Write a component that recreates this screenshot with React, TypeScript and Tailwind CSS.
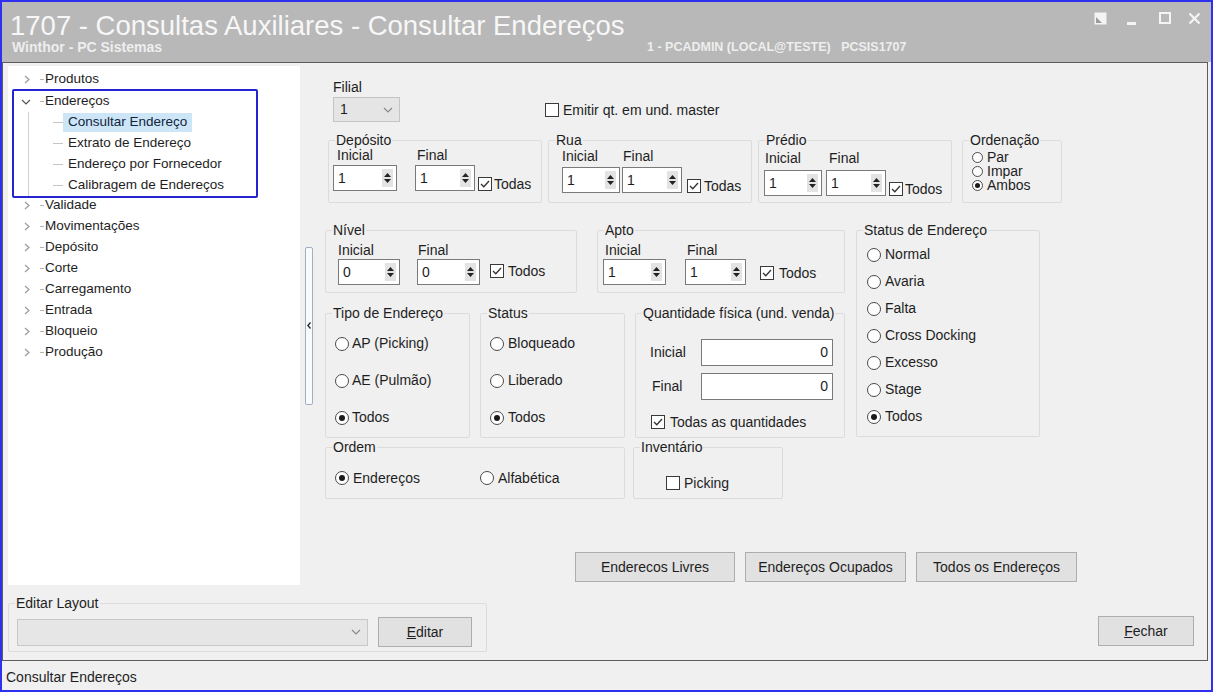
import React from "react";

type Kids = { children?: React.ReactNode; className?: string };

function Check({ checked }: { checked?: boolean }) {
  return (
    <span className="w-[14px] h-[14px] border border-[#3a3a3a] bg-white flex items-center justify-center shrink-0">
      {checked && (
        <svg width="10" height="8" viewBox="0 0 10 8">
          <path d="M1 4 L3.8 6.8 L9 1" fill="none" stroke="#333" strokeWidth="1.3" />
        </svg>
      )}
    </span>
  );
}

function Radio({ on, small }: { on?: boolean; small?: boolean }) {
  return (
    <span
      className={`${small ? "w-[11px] h-[11px]" : "w-[14px] h-[14px]"} rounded-full border border-[#4a4a4a] bg-white flex items-center justify-center shrink-0`}
    >
      {on && <span className={`${small ? "w-[5px] h-[5px]" : "w-[6px] h-[6px]"} rounded-full bg-[#1a1a1a]`} />}
    </span>
  );
}

function Spin({ value, w }: { value: string; w: string }) {
  return (
    <div className={`${w} h-[26px] border border-[#7a7a7a] bg-white flex items-center`}>
      <span className="flex-1 pl-[4px] leading-none">{value}</span>
      <span className="w-[11px] h-[18px] bg-[#e3e3e3] mr-[3px] flex flex-col items-center justify-center gap-[2px]">
        <svg width="7" height="4" viewBox="0 0 7 4">
          <path d="M0 4 L3.5 0 L7 4Z" fill="#222" />
        </svg>
        <svg width="7" height="4" viewBox="0 0 7 4">
          <path d="M0 0 L3.5 4 L7 0Z" fill="#222" />
        </svg>
      </span>
    </div>
  );
}

function Group({ title, className, children }: Kids & { title: string }) {
  return (
    <fieldset className={`border border-[#dcdcdc] rounded-[2px] shrink-0 ${className ?? ""}`}>
      <legend className="ml-[6px] px-[1px] leading-[14px]">{title}</legend>
      {children}
    </fieldset>
  );
}

function Btn({ children, className }: Kids) {
  return (
    <div className={`h-[30px] bg-[#e1e1e1] border border-[#adadad] flex items-center justify-center shrink-0 ${className ?? ""}`}>
      {children}
    </div>
  );
}

function Chevron() {
  return (
    <svg width="6" height="9" viewBox="0 0 6 9" className="shrink-0">
      <path d="M1 1 L5 4.5 L1 8" fill="none" stroke="#9a9a9a" strokeWidth="1.2" />
    </svg>
  );
}

function TreeRow({ label }: { label: string }) {
  return (
    <div className="h-[21px] flex items-center pl-[16px]">
      <Chevron />
      <span className="ml-[10px] w-[4px] h-px bg-[#b4b4b4]" />
      <span className="ml-[1px]">{label}</span>
    </div>
  );
}

function Child({ label, selected }: { label: string; selected?: boolean }) {
  return (
    <div className="h-[21px] flex items-center">
      <span className="ml-[24px] w-[10px] h-px bg-[#c4c4c4]" />
      <span className={`h-[19px] flex items-center px-[5px] ${selected ? "bg-[#cde6f7] text-[#13233d]" : ""}`}>{label}</span>
    </div>
  );
}

function Tree() {
  const rest = ["Validade", "Movimentações", "Depósito", "Corte", "Carregamento", "Entrada", "Bloqueio", "Produção"];
  return (
    <div className="ml-[5px] mt-[3px] w-[292px] h-[519px] bg-white pt-[3px] text-[13.5px]">
      <TreeRow label="Produtos" />
      <div className="ml-[4px] w-[246px] border-2 border-[#2424d0] rounded-[2px] -mt-[1px] -mb-[3px]">
        <div className="h-[21px] flex items-center pl-[7px]">
          <svg width="10" height="6" viewBox="0 0 10 6" className="shrink-0">
            <path d="M1 1 L5 5 L9 1" fill="none" stroke="#555" strokeWidth="1.2" />
          </svg>
          <span className="ml-[9px] w-[4px] h-px bg-[#b4b4b4]" />
          <span className="ml-[1px]">Endereços</span>
        </div>
        <div className="ml-[14px] border-l border-[#d0d0d0]">
          <Child label="Consultar Endereço" selected />
          <Child label="Extrato de Endereço" />
          <Child label="Endereço por Fornecedor" />
          <Child label="Calibragem de Endereços" />
        </div>
      </div>
      {rest.map((r) => (
        <TreeRow key={r} label={r} />
      ))}
    </div>
  );
}

function Form() {
  const status = ["Normal", "Avaria", "Falta", "Cross Docking", "Excesso", "Stage", "Todos"];
  return (
    <div className="flex flex-col w-[892px]">
      {/* Filial + master unit option */}
      <div className="flex items-end pl-[18px] pt-[17px]">
        <div className="flex flex-col">
          <span className="leading-[14px]">Filial</span>
          <div className="mt-[3px] w-[67px] h-[25px] bg-[#e5e5e5] border border-[#c4c4c4] flex items-center justify-between px-[6px]">
            <span>1</span>
            <svg width="10" height="6" viewBox="0 0 10 6">
              <path d="M1 1 L5 5 L9 1" fill="none" stroke="#8a8a8a" strokeWidth="1.2" />
            </svg>
          </div>
        </div>
        <div className="ml-[145px] mb-[5px] flex items-center">
          <Check />
          <span className="ml-[4px] leading-[14px]">Emitir qt. em und. master</span>
        </div>
      </div>

      {/* Depósito / Rua / Prédio / Ordenação */}
      <div className="flex mt-[11px] pl-[13px]">
        <Group title="Depósito" className="w-[214px] h-[70px]">
          <div className="flex items-end pl-[4px] pt-[2px]">
            <div className="flex flex-col">
              <span className="pl-[4px] leading-[12px]">Inicial</span>
              <div className="mt-[4px]">
                <Spin value="1" w="w-[64px]" />
              </div>
            </div>
            <div className="flex flex-col ml-[18px]">
              <span className="pl-[2px] leading-[12px]">Final</span>
              <div className="mt-[4px]">
                <Spin value="1" w="w-[60px]" />
              </div>
            </div>
            <div className="flex items-center ml-[3px]">
              <Check checked />
              <span className="ml-[2px] leading-[14px]">Todas</span>
            </div>
          </div>
        </Group>
        <Group title="Rua" className="ml-[6px] w-[204px] h-[70px]">
          <div className="flex items-end pl-[13px] pt-[3px]">
            <div className="flex flex-col">
              <span className="leading-[12px]">Inicial</span>
              <div className="mt-[5px]">
                <Spin value="1" w="w-[58px]" />
              </div>
            </div>
            <div className="flex flex-col ml-[2px]">
              <span className="pl-[1px] leading-[12px]">Final</span>
              <div className="mt-[5px]">
                <Spin value="1" w="w-[60px]" />
              </div>
            </div>
            <div className="flex items-center ml-[5px]">
              <Check checked />
              <span className="ml-[3px] leading-[14px]">Todas</span>
            </div>
          </div>
        </Group>
        <Group title="Prédio" className="ml-[6px] w-[194px] h-[70px]">
          <div className="flex items-end pl-[5px] pt-[5px]">
            <div className="flex flex-col">
              <span className="pl-[1px] leading-[12px]">Inicial</span>
              <div className="mt-[6px]">
                <Spin value="1" w="w-[58px]" />
              </div>
            </div>
            <div className="flex flex-col ml-[4px]">
              <span className="pl-[3px] leading-[12px]">Final</span>
              <div className="mt-[6px]">
                <Spin value="1" w="w-[60px]" />
              </div>
            </div>
            <div className="flex items-center ml-[3px]">
              <Check checked />
              <span className="ml-[2px] leading-[14px]">Todos</span>
            </div>
          </div>
        </Group>
        <Group title="Ordenação" className="ml-[10px] w-[100px] h-[70px]">
          <div className="flex flex-col pl-[9px] mt-[3px]">
            <div className="h-[14px] flex items-center">
              <Radio small />
              <span className="ml-[4px] leading-[14px]">Par</span>
            </div>
            <div className="h-[14px] flex items-center">
              <Radio small />
              <span className="ml-[4px] leading-[14px]">Impar</span>
            </div>
            <div className="h-[14px] flex items-center">
              <Radio small on />
              <span className="ml-[4px] leading-[14px]">Ambos</span>
            </div>
          </div>
        </Group>
      </div>

      {/* Nível / Apto / tipos / quantidades + status de endereço */}
      <div className="flex items-start mt-[20px] pl-[10px]">
        <div className="flex flex-col">
          <div className="flex">
            <Group title="Nível" className="w-[252px] h-[70px]">
              <div className="flex items-center pl-[12px] pt-[7px]">
                <div className="flex flex-col">
                  <span className="leading-[12px]">Inicial</span>
                  <div className="mt-[3px]">
                    <Spin value="0" w="w-[62px]" />
                  </div>
                </div>
                <div className="flex flex-col ml-[17px]">
                  <span className="pl-[1px] leading-[12px]">Final</span>
                  <div className="mt-[3px]">
                    <Spin value="0" w="w-[63px]" />
                  </div>
                </div>
                <div className="flex items-center ml-[10px] mt-[13px]">
                  <Check checked />
                  <span className="ml-[4px] leading-[14px]">Todos</span>
                </div>
              </div>
            </Group>
            <Group title="Apto" className="ml-[20px] w-[248px] h-[70px]">
              <div className="flex items-center pl-[5px] pt-[7px]">
                <div className="flex flex-col">
                  <span className="pl-[2px] leading-[12px]">Inicial</span>
                  <div className="mt-[3px]">
                    <Spin value="1" w="w-[63px]" />
                  </div>
                </div>
                <div className="flex flex-col ml-[19px]">
                  <span className="pl-[2px] leading-[12px]">Final</span>
                  <div className="mt-[3px]">
                    <Spin value="1" w="w-[61px]" />
                  </div>
                </div>
                <div className="flex items-center ml-[14px] mt-[17px]">
                  <Check checked />
                  <span className="ml-[5px] leading-[14px]">Todos</span>
                </div>
              </div>
            </Group>
          </div>
          <div className="flex mt-[13px]">
            <Group title="Tipo de Endereço" className="w-[145px] h-[132px]">
              <div className="flex flex-col pl-[9px] mt-[5px]">
                {[
                  ["AP (Picking)", false],
                  ["AE (Pulmão)", false],
                  ["Todos", true],
                ].map(([t, on]) => (
                  <div key={t as string} className="h-[37px] flex items-center">
                    <Radio on={on as boolean} />
                    <span className="ml-[3px]">{t as string}</span>
                  </div>
                ))}
              </div>
            </Group>
            <Group title="Status" className="ml-[10px] w-[145px] h-[132px]">
              <div className="flex flex-col pl-[9px] mt-[5px]">
                {[
                  ["Bloqueado", false],
                  ["Liberado", false],
                  ["Todos", true],
                ].map(([t, on]) => (
                  <div key={t as string} className="h-[37px] flex items-center">
                    <Radio on={on as boolean} />
                    <span className="ml-[4px]">{t as string}</span>
                  </div>
                ))}
              </div>
            </Group>
            <Group title="Quantidade física (und. venda)" className="ml-[10px] w-[210px] h-[132px]">
              <div className="flex flex-col pl-[14px] mt-[19px]">
                <div className="flex items-center">
                  <span className="w-[51px]">Inicial</span>
                  <div className="w-[132px] h-[27px] bg-white border border-[#7a7a7a] flex items-center justify-end pr-[4px]">0</div>
                </div>
                <div className="flex items-center mt-[7px]">
                  <span className="w-[51px] pl-[2px]">Final</span>
                  <div className="w-[132px] h-[27px] bg-white border border-[#7a7a7a] flex items-center justify-end pr-[4px]">0</div>
                </div>
                <div className="flex items-center mt-[15px] pl-[1px]">
                  <Check checked />
                  <span className="ml-[5px] leading-[14px]">Todas as quantidades</span>
                </div>
              </div>
            </Group>
          </div>
        </div>
        <Group title="Status de Endereço" className="ml-[11px] w-[184px] h-[214px]">
          <div className="flex flex-col pl-[10px] mt-[4px]">
            {status.map((s) => (
              <div key={s} className="h-[27px] flex items-center">
                <Radio on={s === "Todos"} />
                <span className="ml-[4px]">{s}</span>
              </div>
            ))}
          </div>
        </Group>
      </div>

      {/* Ordem / Inventário */}
      <div className="flex mt-[2px] pl-[10px]">
        <Group title="Ordem" className="w-[300px] h-[59px]">
          <div className="flex items-center pl-[9px] mt-[17px] h-[14px]">
            <div className="w-[145px] flex items-center">
              <Radio on />
              <span className="ml-[4px]">Endereços</span>
            </div>
            <Radio />
            <span className="ml-[4px]">Alfabética</span>
          </div>
        </Group>
        <Group title="Inventário" className="ml-[8px] w-[150px] h-[59px]">
          <div className="flex items-center pl-[32px] mt-[22px]">
            <Check />
            <span className="ml-[4px] leading-[14px]">Picking</span>
          </div>
        </Group>
      </div>

      {/* Consultas */}
      <div className="flex mt-[53px] pl-[260px] gap-[10px]">
        <Btn className="w-[160px]">Enderecos Livres</Btn>
        <Btn className="w-[161px]">Endereços Ocupados</Btn>
        <Btn className="w-[161px]">Todos os Endereços</Btn>
      </div>
    </div>
  );
}

export default function App() {
  return (
    <div className="w-[1213px] h-[692px] border-2 border-[#2f2ff0] bg-[#f0f0f0] flex flex-col overflow-hidden font-['Liberation_Sans',Arial,sans-serif] text-[14px] text-[#1e1e1e]">
      {/* Title bar */}
      <div className="h-[60px] shrink-0 bg-[#b8b8b8] flex flex-col text-[#f7f7f7]">
        <div className="flex items-start justify-between">
          <span className="pl-[8px] mt-[10px] text-[27.5px] leading-[28px]">1707 - Consultas Auxiliares - Consultar Endereços</span>
          <div className="flex items-center mt-[9px] mr-[10px] h-[14px]">
            <svg width="13" height="13" viewBox="0 0 13 13">
              <rect x="0.5" y="0.5" width="12" height="12" fill="#f4f4f4" />
              <path d="M2 11 L2 5 L8 11Z" fill="#9c9c9c" />
            </svg>
            <svg width="10" height="14" viewBox="0 0 10 14" className="ml-[20px]">
              <rect x="0" y="11" width="9" height="3" fill="#f4f4f4" />
            </svg>
            <svg width="12" height="12" viewBox="0 0 12 12" className="ml-[22px]">
              <rect x="1" y="1" width="10" height="10" fill="none" stroke="#f4f4f4" strokeWidth="2" />
            </svg>
            <svg width="13" height="13" viewBox="0 0 13 13" className="ml-[17px]">
              <path d="M1.5 1.5 L11.5 11.5 M11.5 1.5 L1.5 11.5" stroke="#f4f4f4" strokeWidth="2.2" />
            </svg>
          </div>
        </div>
        <div className="flex items-center mt-[-1px] h-[16px] font-bold text-[#eeeeee]">
          <span className="pl-[10px] w-[645px] text-[14px] leading-[16px]">Winthor - PC Sistemas</span>
          <span className="text-[12.5px] leading-[16px] whitespace-pre">1 - PCADMIN (LOCAL@TESTE)   PCSIS1707</span>
        </div>
      </div>

      {/* Main panel */}
      <div className="h-[599px] shrink-0 mr-[3px] border border-[#5c5c5c] flex flex-col">
        <div className="h-[527px] flex">
          <Tree />
          <div className="w-[15px] h-[519px] mt-[3px] flex items-center">
            <div className="ml-[5px] w-[8px] h-[158px] bg-[#f8fafc] border border-[#9fb0c4] rounded-[2px] flex items-center justify-center">
              <svg width="4" height="7" viewBox="0 0 4 7">
                <path d="M3.5 0.5 L0.8 3.5 L3.5 6.5" fill="none" stroke="#222" strokeWidth="1.3" />
              </svg>
            </div>
          </div>
          <Form />
        </div>
        <div className="flex">
          <Group title="Editar Layout" className="ml-[5px] mt-[6px] w-[479px] h-[56px]">
            <div className="flex items-center pl-[8px] mt-[7px]">
              <div className="w-[351px] h-[27px] bg-[#e6e6e6] border border-[#c8c8c8] flex items-center justify-end pr-[6px]">
                <svg width="10" height="6" viewBox="0 0 10 6">
                  <path d="M1 1 L5 5 L9 1" fill="none" stroke="#8a8a8a" strokeWidth="1.2" />
                </svg>
              </div>
              <Btn className="ml-[10px] w-[94px]">
                <span>
                  <span className="underline">E</span>ditar
                </span>
              </Btn>
            </div>
          </Group>
          <Btn className="ml-auto mr-[13px] mt-[26px] w-[96px]">
            <span>
              <span className="underline">F</span>echar
            </span>
          </Btn>
        </div>
      </div>

      {/* Status bar */}
      <div className="flex-1 flex items-center pl-[4px] pt-[3px]">Consultar Endereços</div>
    </div>
  );
}
